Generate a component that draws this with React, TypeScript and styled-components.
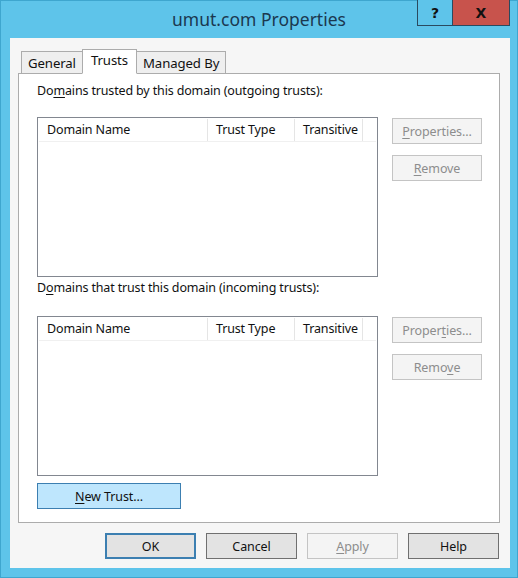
import React from "react";
import styled, { createGlobalStyle } from "styled-components";

const Global = createGlobalStyle`
  html, body { margin: 0; padding: 0; }
  body { width: 518px; height: 578px; overflow: hidden; font-family: "Noto Sans", "Open Sans", sans-serif; }
`;

const Window = styled.div`
  width: 518px;
  height: 578px;
  box-sizing: border-box;
  background: #5ec4ea;
  border: 1px solid #3ea6cf;
  display: flex;
  flex-direction: column;
`;

const TitleBar = styled.div`
  height: 37px;
  display: grid;
  grid-template-columns: 1fr auto 1fr;
  align-items: start;
`;

const Title = styled.div`
  grid-column: 2;
  margin-top: 6px;
  font-family: "Noto Sans", "Open Sans", sans-serif;
  font-size: 17.5px;
  color: #1b3850;
`;

const Controls = styled.div`
  grid-column: 3;
  justify-self: end;
  display: flex;
  margin-right: 7px;
  margin-top: -1px;
`;

const CtrlButton = styled.div<{ $close?: boolean }>`
  width: ${(p) => (p.$close ? "57px" : "36px")};
  height: 26px;
  box-sizing: border-box;
  background: ${(p) => (p.$close ? "#c8534c" : "#5ec4ea")};
  border: 1px solid #2a4a60;
  border-top: none;
  ${(p) => (p.$close ? "border-left: none;" : "")}
  display: flex;
  align-items: center;
  justify-content: center;
  font-family: "DejaVu Sans", sans-serif;
  font-weight: bold;
  font-size: 14px;
  color: #111;
`;

const Client = styled.div`
  flex: 1;
  margin: 0 7px 9px 9px;
  background: #f6f6f6;
  display: flex;
  flex-direction: column;
  padding: 10px 10px 9px 8px;
  box-sizing: border-box;
`;

const TabRow = styled.div`
  display: flex;
  align-items: flex-end;
  padding-left: 4px;
  height: 25px;
  position: relative;
  z-index: 1;
`;

const Tab = styled.div<{ $active?: boolean }>`
  height: ${(p) => (p.$active ? "25px" : "22px")};
  box-sizing: border-box;
  padding: 0 ${(p) => (p.$active ? "8px" : "6px")};
  border: 1px solid #acacac;
  border-bottom: ${(p) => (p.$active ? "1px solid #ffffff" : "none")};
  margin-bottom: ${(p) => (p.$active ? "-1px" : "0")};
  background: ${(p) => (p.$active ? "#ffffff" : "#efefef")};
  margin-left: -1px;
  font-size: 13.2px;
  letter-spacing: -0.1px;
  color: #111;
  display: flex;
  align-items: ${(p) => (p.$active ? "flex-start" : "center")};
  padding-top: ${(p) => (p.$active ? "1px" : "0")};
`;

const Panel = styled.div`
  height: 450px;
  box-sizing: border-box;
  background: #ffffff;
  border: 1px solid #acacac;
  padding: 8px 0 0 18px;
  display: flex;
  flex-direction: column;
`;

const Label = styled.div`
  font-size: 12.5px;
  letter-spacing: -0.15px;
  color: #111;
  height: 20px;
  line-height: 18px;
`;

const Section = styled.div<{ $top: number }>`
  display: flex;
  gap: 14px;
  margin-top: ${(p) => p.$top}px;
  margin-bottom: 2px;
`;

const List = styled.div`
  width: 341px;
  height: 160px;
  box-sizing: border-box;
  border: 1px solid #828790;
  background: #fff;
  padding: 1px;
`;

const Header = styled.div`
  display: flex;
  height: 22px;
  background: #fff;
  border-bottom: 1px solid #f0f0f0;
`;

const HeaderCell = styled.div<{ $w: number }>`
  width: ${(p) => p.$w}px;
  box-sizing: border-box;
  border-right: 1px solid #e5e5e5;
  padding-left: 8px;
  font-size: 12.5px;
  letter-spacing: -0.15px;
  color: #111;
  line-height: 21px;
  white-space: nowrap;
`;

const SideButtons = styled.div`
  display: flex;
  flex-direction: column;
  gap: 11px;
  padding-top: 1px;
`;

const Button = styled.div<{ $w: number; $disabled?: boolean; $default?: boolean; $hot?: boolean }>`
  width: ${(p) => p.$w}px;
  height: 26px;
  box-sizing: border-box;
  border: 1px solid
    ${(p) => (p.$disabled ? "#c4c4c4" : p.$default || p.$hot ? "#3c7fb1" : "#707070")};
  background: ${(p) => (p.$disabled ? "#f4f4f4" : p.$hot ? "#bee6fd" : "#e3e3e3")};
  color: ${(p) => (p.$disabled ? "#8d8d8d" : "#111")};
  font-size: 12.5px;
  letter-spacing: -0.1px;
  display: flex;
  align-items: center;
  justify-content: center;
  ${(p) => (p.$default ? "box-shadow: inset 0 0 0 1px #3c7fb1;" : "")}
`;

const U = styled.span`
  text-decoration: underline;
  text-underline-offset: 2px;
`;

const BottomArea = styled.div`
  margin-top: 5px;
`;

const Footer = styled.div`
  display: flex;
  justify-content: flex-end;
  gap: 10px;
  margin-top: auto;
  padding-right: 1px;
`;

function TrustList() {
  return (
    <List>
      <Header>
        <HeaderCell $w={169}>Domain Name</HeaderCell>
        <HeaderCell $w={87}>Trust Type</HeaderCell>
        <HeaderCell $w={68}>Transitive</HeaderCell>
      </Header>
    </List>
  );
}

export default function App() {
  return (
    <>
      <Global />
      <Window>
        <TitleBar>
          <Title>umut.com Properties</Title>
          <Controls>
            <CtrlButton>?</CtrlButton>
            <CtrlButton $close>X</CtrlButton>
          </Controls>
        </TitleBar>
        <Client>
          <TabRow>
            <Tab>General</Tab>
            <Tab $active>Trusts</Tab>
            <Tab>Managed By</Tab>
          </TabRow>
          <Panel>
            <Label>
              Do<U>m</U>ains trusted by this domain (outgoing trusts):
            </Label>
            <Section $top={15}>
              <TrustList />
              <SideButtons>
                <Button $w={90} $disabled>
                  <span><U>P</U>roperties...</span>
                </Button>
                <Button $w={90} $disabled>
                  <span><U>R</U>emove</span>
                </Button>
              </SideButtons>
            </Section>
            <Label>
              D<U>o</U>mains that trust this domain (incoming trusts):
            </Label>
            <Section $top={17}>
              <TrustList />
              <SideButtons>
                <Button $w={90} $disabled>
                  <span>Proper<U>t</U>ies...</span>
                </Button>
                <Button $w={90} $disabled>
                  <span>Remo<U>v</U>e</span>
                </Button>
              </SideButtons>
            </Section>
            <BottomArea>
              <Button $w={144} $hot>
                <span><U>N</U>ew Trust...</span>
              </Button>
            </BottomArea>
          </Panel>
          <Footer>
            <Button $w={91} $default>OK</Button>
            <Button $w={91}>Cancel</Button>
            <Button $w={91} $disabled>
              <span><U>A</U>pply</span>
            </Button>
            <Button $w={91}>Help</Button>
          </Footer>
        </Client>
      </Window>
    </>
  );
}
